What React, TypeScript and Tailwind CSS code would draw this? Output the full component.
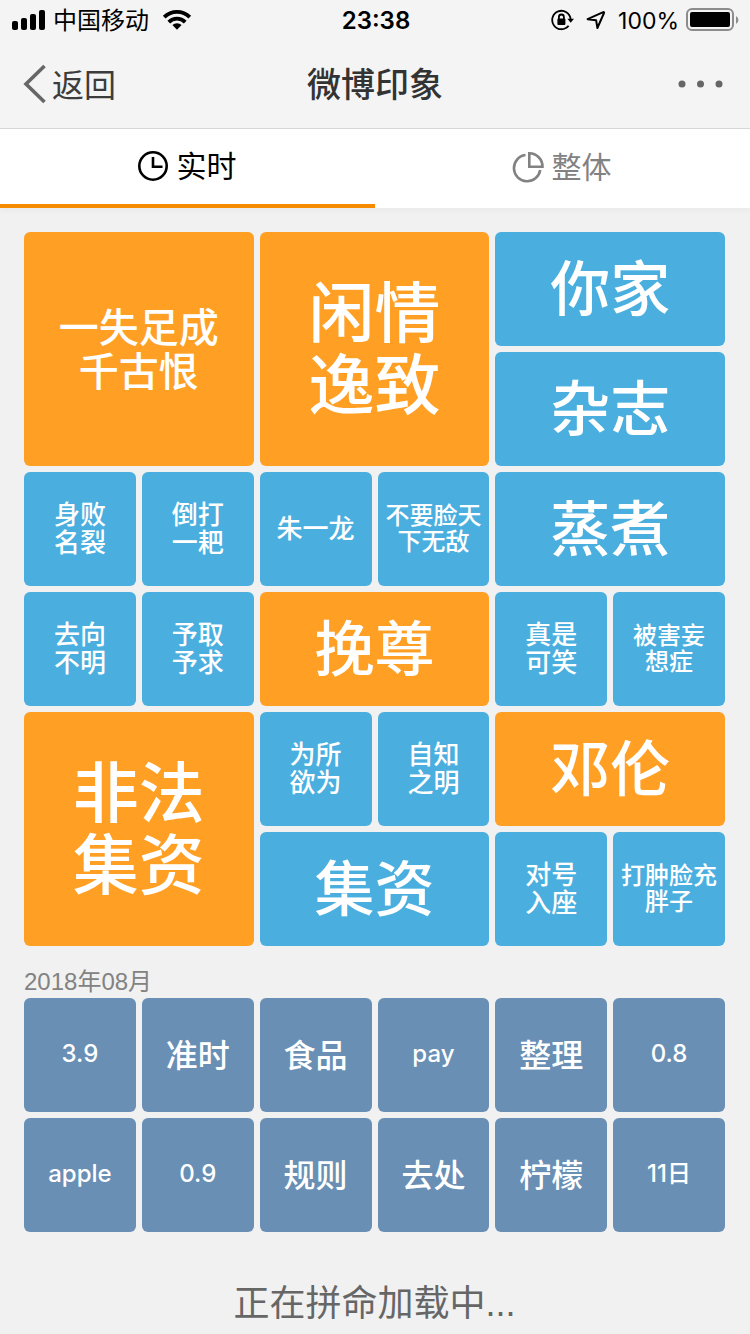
import { useState } from "react";
import type { ReactNode } from "react";

type Tile = { label: string; box: string; text: string };

const ORANGE = "bg-[#ff9f24]";
const BLUE = "bg-[#4aafdf]";
const SLATE = "bg-[#698fb5]";
const BIG = "col-span-2 row-span-2";
const WIDE = "col-span-2";

const T66 = "text-[66px] leading-[72px]";
const T60 = "text-[60px] leading-[64px]";
const T40 = "pt-[2px] text-[40px] leading-[44px]";
const T32 = "pt-[2px] text-[32px] leading-[36px]";
const T26 = "text-[26px] leading-[28px]";
const T24 = "text-[24px] leading-[26px]";
const LATIN = "pb-[2px] text-[24px] leading-[28px]";

const realtime: Tile[] = [
  { label: "一失足成\n千古恨", box: `${BIG} ${ORANGE}`, text: T40 },
  { label: "闲情\n逸致", box: `${BIG} ${ORANGE}`, text: T66 },
  { label: "你家", box: `${WIDE} ${BLUE}`, text: T60 },
  { label: "杂志", box: `${WIDE} ${BLUE}`, text: T60 },
  { label: "身败\n名裂", box: BLUE, text: T26 },
  { label: "倒打\n一耙", box: BLUE, text: T26 },
  { label: "朱一龙", box: BLUE, text: T26 },
  { label: "不要脸天\n下无敌", box: BLUE, text: T24 },
  { label: "蒸煮", box: `${WIDE} ${BLUE}`, text: T60 },
  { label: "去向\n不明", box: BLUE, text: T26 },
  { label: "予取\n予求", box: BLUE, text: T26 },
  { label: "挽尊", box: `${WIDE} ${ORANGE}`, text: T60 },
  { label: "真是\n可笑", box: BLUE, text: T26 },
  { label: "被害妄\n想症", box: BLUE, text: T24 },
  { label: "非法\n集资", box: `${BIG} ${ORANGE}`, text: T66 },
  { label: "为所\n欲为", box: BLUE, text: T26 },
  { label: "自知\n之明", box: BLUE, text: T26 },
  { label: "邓伦", box: `${WIDE} ${ORANGE}`, text: T60 },
  { label: "集资", box: `${WIDE} ${BLUE}`, text: T60 },
  { label: "对号\n入座", box: BLUE, text: T26 },
  { label: "打肿脸充\n胖子", box: BLUE, text: T24 },
];

const august: Tile[] = [
  { label: "3.9", box: SLATE, text: LATIN },
  { label: "准时", box: SLATE, text: T32 },
  { label: "食品", box: SLATE, text: T32 },
  { label: "pay", box: SLATE, text: LATIN },
  { label: "整理", box: SLATE, text: T32 },
  { label: "0.8", box: SLATE, text: LATIN },
  { label: "apple", box: SLATE, text: LATIN },
  { label: "0.9", box: SLATE, text: LATIN },
  { label: "规则", box: SLATE, text: T32 },
  { label: "去处", box: SLATE, text: T32 },
  { label: "柠檬", box: SLATE, text: T32 },
  { label: "11日", box: SLATE, text: LATIN },
];

function TileGrid({ tiles }: { tiles: Tile[] }) {
  return (
    <div className="grid auto-rows-[114px] grid-cols-6 gap-[6px]">
      {tiles.map((tile) => (
        <a
          key={tile.label}
          href="#"
          className={`flex items-center justify-center rounded-[6px] text-center font-medium whitespace-pre text-white ${tile.box} ${tile.text}`}
        >
          {tile.label}
        </a>
      ))}
    </div>
  );
}

function StatusBar() {
  return (
    <div className="grid h-10 grid-cols-[1fr_auto_1fr] items-center text-[24px] leading-[28px] text-black">
      <div className="flex items-center pl-3">
        <svg width="34" height="20" viewBox="0 0 34 20" aria-hidden="true">
          <rect x="0" y="11" width="6" height="9" rx="2" />
          <rect x="9" y="8" width="6" height="12" rx="2" />
          <rect x="18" y="4" width="6" height="16" rx="2" />
          <rect x="27" y="0" width="6" height="20" rx="2" />
        </svg>
        <span className="ml-[7px] pt-[2px]">中国移动</span>
        <svg className="ml-[13px]" width="30" height="20" viewBox="0 0 30 20" aria-hidden="true">
          <g fill="none" stroke="black" strokeWidth="3.8">
            <path d="M2.200 7.200a18.200 18.200 0 0 1 25.600 0" />
            <path d="M6.800 12.100a11.600 11.600 0 0 1 16.400 0" />
          </g>
          <path d="M15 19.800l-4.600-4.700a6.500 6.500 0 0 1 9.200 0z" />
        </svg>
      </div>
      <span className="pt-[2px] pl-[2px] font-semibold">23:38</span>
      <div className="flex items-center justify-end pr-[11px]">
        <svg width="24" height="22" viewBox="0 0 24 22" aria-hidden="true">
          <g fill="none" stroke="black" strokeWidth="1.800">
            <path d="M19.600 10.200A9.200 9.200 0 1 0 17.600 16.800" />
            <path d="M7.900 10V8a2.500 2.500 0 0 1 5 0v2" />
          </g>
          <rect x="6.400" y="9.500" width="8" height="6.500" rx="1" />
          <path d="M16.400 9.800h6.600L19.700 13.800z" />
        </svg>
        <svg className="ml-[11px]" width="20" height="20" viewBox="0 0 20 20" aria-hidden="true">
          <path d="M1.600 9.200L17.200 2.200a.6.6 0 0 1 .8.800L11.400 18l-1.300-7.800z" fill="none" stroke="black" strokeWidth="2" strokeLinejoin="round" />
        </svg>
        <span className="ml-[12px] pt-[2px] text-[23px]">100%</span>
        <svg className="ml-[7px]" width="53" height="24" viewBox="0 0 53 24" aria-hidden="true">
          <rect x="1" y="1" width="46" height="21" rx="5" fill="none" stroke="#8c8c8c" strokeWidth="2" />
          <rect x="4" y="4" width="40" height="15" rx="2" />
          <path d="M50 8a4.500 4.500 0 0 1 0 8z" fill="#8c8c8c" />
        </svg>
      </div>
    </div>
  );
}

function Tab({
  active,
  icon,
  label,
  onClick,
}: {
  active: boolean;
  icon: ReactNode;
  label: string;
  onClick: () => void;
}) {
  return (
    <button
      type="button"
      role="tab"
      aria-selected={active}
      onClick={onClick}
      className={`flex h-full flex-1 items-center justify-center gap-[8px] border-b-4 pr-[2px] text-[30px] leading-[36px] ${
        active ? "border-[#f78b00] pb-[2px] text-black" : "border-transparent text-[#828282]"
      }`}
    >
      {icon}
      <span>{label}</span>
    </button>
  );
}

export default function App() {
  const [tab, setTab] = useState(0);

  return (
    <div className="min-h-screen bg-[#f1f1f1] font-['Inter','Noto_Sans_CJK_SC',sans-serif]">
      <header className="border-b border-[#d8d8d8] bg-[#f4f4f4]">
        <StatusBar />
        <nav className="grid h-[88px] grid-cols-[1fr_auto_1fr] items-center">
          <button
            type="button"
            className="ml-[23px] flex items-center gap-[5px] justify-self-start text-[32px] leading-[40px] text-[#3c3c3c]"
          >
            <svg width="24" height="40" viewBox="0 0 24 40" aria-hidden="true">
              <path d="M21.500 2L3 20l18.500 18" fill="none" stroke="#666666" strokeWidth="3.600" />
            </svg>
            <span className="pt-[3px]">返回</span>
          </button>
          <h1 className="pt-[2px] text-[34px] leading-[40px] font-medium text-[#333333]">微博印象</h1>
          <button type="button" aria-label="更多" className="mr-[27px] justify-self-end">
            <svg width="45" height="8" viewBox="0 0 45 8" fill="#666666" aria-hidden="true">
              <circle cx="4" cy="4" r="3.500" />
              <circle cx="22.500" cy="4" r="3.500" />
              <circle cx="41" cy="4" r="3.500" />
            </svg>
          </button>
        </nav>
      </header>

      <div role="tablist" className="flex h-[79px] bg-white shadow-[0_2px_6px_rgba(0,0,0,0.04)]">
        <Tab
          active={tab === 0}
          onClick={() => setTab(0)}
          label="实时"
          icon={
            <svg width="32" height="32" viewBox="0 0 32 32" fill="none" stroke="currentColor" strokeWidth="2.600" aria-hidden="true">
              <circle cx="16" cy="16" r="13.700" />
              <path d="M16 7v9.700h9.500" />
            </svg>
          }
        />
        <Tab
          active={tab === 1}
          onClick={() => setTab(1)}
          label="整体"
          icon={
            <svg width="32" height="32" viewBox="0 0 32 32" fill="none" stroke="currentColor" strokeWidth="2.600" aria-hidden="true">
              <path d="M13.500 4A13.200 13.200 0 1 0 28.200 19" />
              <path d="M17.300 2.300v13.400h13.200A13.300 13.300 0 0 0 17.300 2.300z" />
            </svg>
          }
        />
      </div>

      <main className="pt-6 pr-[25px] pl-6">
        <TileGrid tiles={realtime} />
        <h2 className="mt-[21px] mb-[1px] font-['Liberation_Sans','Noto_Sans_CJK_SC',sans-serif] text-[24px] leading-[30px] text-[#828282]">
          2018年08月
        </h2>
        <TileGrid tiles={august} />
        <p className="pt-[48px] text-center font-['Liberation_Sans','Noto_Sans_CJK_SC',sans-serif] text-[36px] leading-[48px] text-[#666666]">
          正在拼命加载中...
        </p>
      </main>
    </div>
  );
}
